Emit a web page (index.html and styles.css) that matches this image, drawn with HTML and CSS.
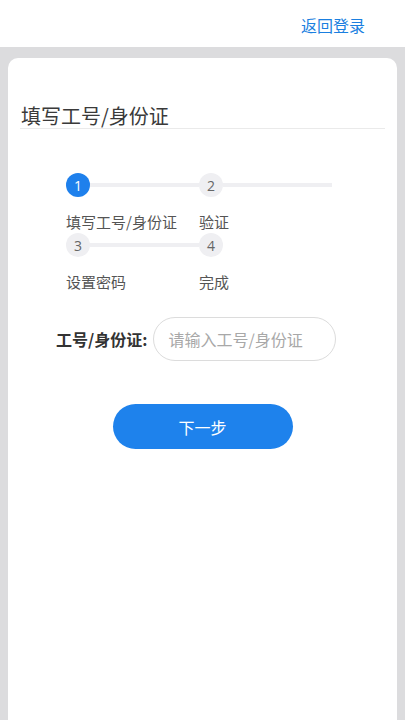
FILE: index.html
```html
<!DOCTYPE html>
<html>

<head>
    <title>找回密码</title>
    <link rel="stylesheet" href="styles.css">
</head>

<body>

    <div class="top-bar">
        <a class="back-link" href="#">返回登录</a>
    </div>

    <div class="card">
        <h2 class="card-title">填写工号/身份证</h2>

        <!-- Steps -->
        <div class="steps">
            <div class="step active">
                <div class="step-head">
                    <span class="step-icon">1</span>
                    <span class="step-line"></span>
                </div>
                <div class="step-title">填写工号/身份证</div>
            </div>
            <div class="step">
                <div class="step-head">
                    <span class="step-icon">2</span>
                    <span class="step-line"></span>
                </div>
                <div class="step-title">验证</div>
            </div>
            <div class="step">
                <div class="step-head">
                    <span class="step-icon">3</span>
                    <span class="step-line"></span>
                </div>
                <div class="step-title">设置密码</div>
            </div>
            <div class="step last">
                <div class="step-head">
                    <span class="step-icon">4</span>
                </div>
                <div class="step-title">完成</div>
            </div>
        </div>

        <!-- Form -->
        <div class="form-row">
            <label class="form-label" for="account">工号/身份证:</label>
            <input class="form-input" type="text" id="account" placeholder="请输入工号/身份证">
        </div>

        <div class="actions">
            <button class="next-btn">下一步</button>
        </div>
    </div>

</body>

</html>
```

FILE: styles.css
```css
body {
    margin: 0;
    background-color: #dcdcde;
    font-family: "Noto Sans CJK SC", "Noto Sans", sans-serif;
    color: #333;
}

.top-bar {
    height: 47px;
    background-color: #fff;
    display: flex;
    align-items: center;
    justify-content: flex-end;
    padding-right: 40px;
}

.back-link {
    color: #1a7fe0;
    font-size: 16px;
    text-decoration: none;
    line-height: 20px;
    margin-top: 3px;
}

.card {
    background-color: #fff;
    margin: 11px 8px 0;
    border-radius: 10px 10px 0 0;
    padding: 46px 12px 0;
    height: 620px;
}

.card-title {
    margin: 0;
    font-size: 20px;
    font-weight: normal;
    line-height: 24px;
    padding-left: 1px;
    color: #3a3a3a;
    border-bottom: 1px solid #eaeaea;
}

.steps {
    display: flex;
    flex-wrap: wrap;
    width: 266px;
    margin: 44px 0 0 46px;
}

.step {
    width: 133px;
    height: 60px;
}

.step-head {
    display: flex;
    align-items: center;
    height: 24px;
}

.step-icon {
    width: 24px;
    height: 24px;
    border-radius: 50%;
    background-color: #efeff2;
    color: #666;
    font-size: 14px;
    font-family: "Open Sans", sans-serif;
    display: flex;
    align-items: center;
    justify-content: center;
    flex-shrink: 0;
}

.step.active .step-icon {
    background-color: #1e80ec;
    color: #fff;
}

.step-line {
    flex: 1;
    height: 4px;
    background-color: #efeff2;
}

.step-title {
    margin-top: 15px;
    font-size: 15px;
    line-height: 20px;
    color: #555;
    white-space: nowrap;
}

.form-row {
    display: flex;
    align-items: center;
    margin: 24px 0 0 36px;
}

.form-label {
    font-size: 16px;
    font-weight: bold;
    color: #333;
    margin-right: 6px;
}

.form-input {
    width: 183px;
    height: 44px;
    box-sizing: border-box;
    border: 1px solid #dcdcdc;
    border-radius: 22px;
    padding: 0 14px;
    font-size: 16px;
    font-family: "Noto Sans CJK SC", sans-serif;
    outline: none;
}

.form-input::placeholder {
    color: #a8a8a8;
}

.actions {
    display: flex;
    justify-content: center;
    margin-top: 43px;
}

.next-btn {
    width: 180px;
    height: 45px;
    border: none;
    border-radius: 23px;
    background-color: #1e82ec;
    color: #fff;
    font-size: 16px;
    font-family: "Noto Sans CJK SC", sans-serif;
}
```
